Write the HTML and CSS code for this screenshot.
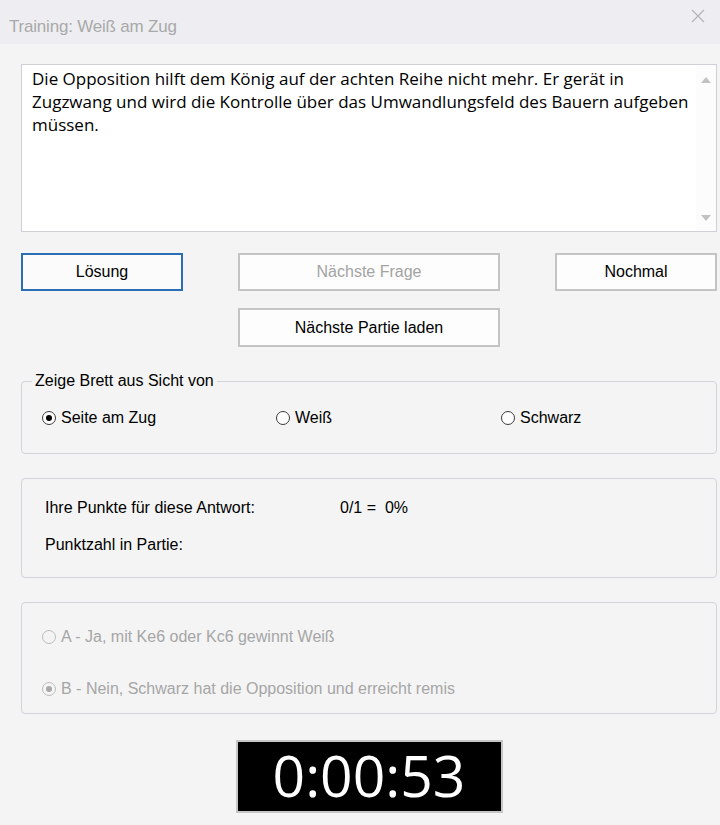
FILE: index.html
```html
<!DOCTYPE html>
<html lang="de">
<head>
<meta charset="utf-8">
<title>Training: Weiß am Zug</title>
<link rel="stylesheet" href="styles.css">
</head>
<body>
<div class="titlebar">
  <span class="title">Training: Weiß am Zug</span>
  <svg class="close" width="14" height="14" viewBox="0 0 14 14"><path d="M1 1 L13 13 M13 1 L1 13" stroke="#b4b4b8" stroke-width="1.2" fill="none"/></svg>
</div>
<div class="content">
  <div class="textbox">
    <div class="textbox-text">Die Opposition hilft dem König auf der achten Reihe nicht mehr. Er gerät in Zugzwang und wird die Kontrolle über das Umwandlungsfeld des Bauern aufgeben müssen.</div>
    <div class="scrollbar">
      <svg width="10" height="6" viewBox="0 0 10 6"><path d="M0 6 L5 0 L10 6 Z" fill="#c2c2c2"/></svg>
      <svg width="10" height="6" viewBox="0 0 10 6"><path d="M0 0 L5 6 L10 0 Z" fill="#c2c2c2"/></svg>
    </div>
  </div>

  <div class="buttons">
    <button class="btn btn-default">Lösung</button>
    <button class="btn btn-disabled">Nächste Frage</button>
    <button class="btn">Nochmal</button>
    <button class="btn btn-second">Nächste Partie laden</button>
  </div>

  <fieldset class="group">
    <legend>Zeige Brett aus Sicht von</legend>
    <div class="radio-row">
      <span class="radio radio-w1"><span class="dot on"></span>Seite am Zug</span>
      <span class="radio radio-w2"><span class="dot"></span>Weiß</span>
      <span class="radio"><span class="dot"></span>Schwarz</span>
    </div>
  </fieldset>

  <div class="box score">
    <div class="score-row"><span class="score-label">Ihre Punkte für diese Antwort:</span><span class="score-value">0/1 =  0%</span></div>
    <div class="score-row"><span class="score-label">Punktzahl in Partie:</span></div>
  </div>

  <div class="box answers">
    <span class="radio disabled"><span class="dot"></span>A - Ja, mit Ke6 oder Kc6 gewinnt Weiß</span>
    <span class="radio disabled"><span class="dot on"></span>B - Nein, Schwarz hat die Opposition und erreicht remis</span>
  </div>

  <div class="timer">0:00:53</div>
</div>
</body>
</html>
```

FILE: styles.css
```css
* { box-sizing: border-box; }
html, body { margin: 0; padding: 0; }
body {
  width: 720px;
  height: 825px;
  overflow: hidden;
  background: #f4f4f4;
  font-family: "Liberation Sans", Arial, sans-serif;
  font-size: 16px;
  color: #000;
}
.titlebar {
  height: 44px;
  background: #eeeef2;
  display: flex;
  justify-content: space-between;
  align-items: flex-start;
  padding: 0 15px 0 9px;
}
.title {
  margin-top: 17px;
  line-height: 20px;
  font-size: 17px;
  color: #a9a9a9;
  letter-spacing: -0.2px;
}
.close { margin-top: 9px; }

.content {
  padding: 0 3px 0 21px;
}
.textbox {
  margin-top: 20px;
  height: 168px;
  background: #fff;
  border: 1px solid #cfcfd6;
  display: flex;
}
.textbox-text {
  flex: 1;
  padding: 2px 0 0 10px;
  font-family: "Open Sans", "Noto Sans", sans-serif;
  font-size: 17px;
  line-height: 23px;
  color: #000;
}
.scrollbar {
  width: 20px;
  background: #fcfcfc;
  display: flex;
  flex-direction: column;
  justify-content: space-between;
  align-items: center;
  padding: 12px 0 10px 0;
}

.buttons {
  margin-top: 21px;
  display: grid;
  grid-template-columns: 162px 1fr 162px;
  column-gap: 55px;
  row-gap: 17px;
}
.btn {
  height: 38px;
  font-family: "Liberation Sans", Arial, sans-serif;
  font-size: 16px;
  color: #000;
  background: #fdfdfd;
  border: 2px solid #c4c4c4;
  border-radius: 0;
  padding: 0;
}
.btn-default { border-color: #2a6fb5; background: #fbfbfb; }
.btn-disabled { color: #a3a3a3; }
.btn-second { grid-column: 2; height: 39px; }

.group {
  margin: 25px 0 0 0;
  padding: 18px 0 0 20px;
  height: 82px;
  border: 1px solid #d3d3db;
  border-radius: 4px;
}
.group legend {
  padding: 0 3px;
  margin-left: -10px;
  line-height: 18px;
}
.radio-row { display: flex; }
.radio {
  display: flex;
  align-items: center;
  line-height: 20px;
  white-space: nowrap;
}
.radio-w1 { width: 234px; }
.radio-w2 { width: 225px; }
.dot {
  width: 14px;
  height: 14px;
  border: 1px solid #3a3a3a;
  border-radius: 50%;
  background: #fff;
  margin-right: 5px;
  display: flex;
  align-items: center;
  justify-content: center;
}
.dot.on::after {
  content: "";
  width: 6px;
  height: 6px;
  border-radius: 50%;
  background: #000;
}

.box {
  border: 1px solid #d3d3db;
  border-radius: 4px;
}
.score {
  margin-top: 24px;
  height: 100px;
  padding: 19px 0 0 23px;
  display: flex;
  flex-direction: column;
  row-gap: 17px;
}
.score-row { display: flex; line-height: 20px; }
.score-label { width: 295px; }
.score-value { white-space: pre; }

.answers {
  margin-top: 24px;
  height: 112px;
  padding: 24px 0 0 20px;
  display: flex;
  flex-direction: column;
  row-gap: 32px;
}
.radio.disabled { color: #a6a6a6; }
.radio.disabled .dot { border-color: #bdbdbd; background: #f4f4f4; }
.radio.disabled .dot.on::after { background: #a9a9a9; }

.timer {
  margin: 26px auto 0;
  width: 267px;
  height: 73px;
  background: #000;
  border: 2px solid #c6c6c6;
  color: #fff;
  font-family: "Open Sans", "Noto Sans", sans-serif;
  font-size: 57px;
  line-height: 67px;
  text-align: center;
}
```
